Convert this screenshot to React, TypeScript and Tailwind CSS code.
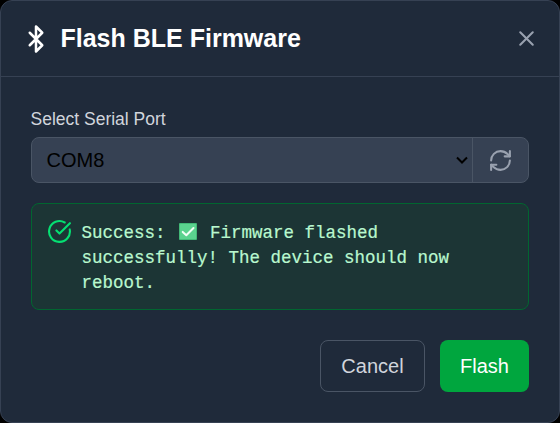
import { Bluetooth, CircleCheckBig, RefreshCw, X } from 'lucide-react';

function CheckMarkBadge() {
  return (
    <svg
      className="mr-[3px] ml-[2.5px] inline-block h-[17px] w-[18px] align-[-2px]"
      viewBox="0 0 18 17"
      role="img"
      aria-label="done"
    >
      <rect width="18" height="17" rx="1" fill="#43b977" />
      <rect x="1" y="1" width="16" height="15" rx="0.5" fill="#5bd38f" />
      <path
        d="M3.7 8.9 7.3 12.3 14.5 5"
        fill="none"
        stroke="#f1fff5"
        strokeWidth="2"
        strokeLinecap="round"
        strokeLinejoin="round"
      />
    </svg>
  );
}

function Header() {
  return (
    <header className="flex h-[76px] items-center justify-between border-b border-[#364153] pr-5 pl-5">
      <div className="flex items-center gap-[10px]">
        <Bluetooth className="size-[30px] text-white" />
        <h2 className="-ml-[0.5px] text-[25px] leading-[35px] font-bold text-white">Flash BLE Firmware</h2>
      </div>
      <button aria-label="Close" className="text-[#99a1af]">
        <X className="size-[25px]" />
      </button>
    </header>
  );
}

function PortPicker() {
  return (
    <div>
      <label htmlFor="port" className="-ml-[0.5px] block h-[25px] text-[17.5px] leading-[25px] text-[#d1d5dc]">
        Select Serial Port
      </label>
      <div className="mt-[5px] flex h-[46px] overflow-hidden rounded-[8px] border border-[#4a5565] bg-[#364153]">
        <button
          id="port"
          className="flex flex-1 items-center justify-between pr-[4px] pl-[14.5px] text-[20px] leading-[30px] text-black"
        >
          COM8
          <svg className="h-[8px] w-[12px]" viewBox="0 0 12 8" fill="none">
            <path d="M1 1.5 6 6.5 11 1.5" stroke="currentColor" strokeWidth="2" />
          </svg>
        </button>
        <button
          aria-label="Refresh ports"
          className="flex w-[56px] items-center justify-center border-l border-[#4a5565] text-[#99a1af]"
        >
          <RefreshCw className="size-[25px]" />
        </button>
      </div>
    </div>
  );
}

function StatusMessage() {
  return (
    <div className="mt-5 flex h-[107px] gap-[10px] rounded-[8px] border border-[#016630] bg-[#1c3535] p-[15px]">
      <CircleCheckBig className="size-[25px] shrink-0 text-[#05df72]" />
      <p className="-ml-[0.5px] pt-[2px] font-['Liberation_Mono',monospace] text-[17.5px] leading-[25px] whitespace-nowrap text-[#b9f8cf] [-webkit-text-stroke:0.2px_#b9f8cf]">
        Success: <CheckMarkBadge /> Firmware flashed
        <br />
        successfully! The device should now
        <br />
        reboot.
      </p>
    </div>
  );
}

export default function App() {
  return (
    <div className="h-[423px] w-[560px] bg-black font-['Liberation_Sans',Arial,sans-serif]">
      <div className="h-full rounded-[12px] border border-[#364153] bg-[#1f2a3a]">
        <Header />
        <main className="px-[30px] pt-[30px]">
          <PortPicker />
          <StatusMessage />
          <footer className="mt-[30px] flex h-[52px] justify-end gap-[15px] text-[20px] leading-[30px]">
            <button className="w-[105px] rounded-[8px] border border-[#4a5565] text-[#d1d5dc]">
              Cancel
            </button>
            <button className="w-[89px] rounded-[8px] bg-[#00a63e] text-white">Flash</button>
          </footer>
        </main>
      </div>
    </div>
  );
}
